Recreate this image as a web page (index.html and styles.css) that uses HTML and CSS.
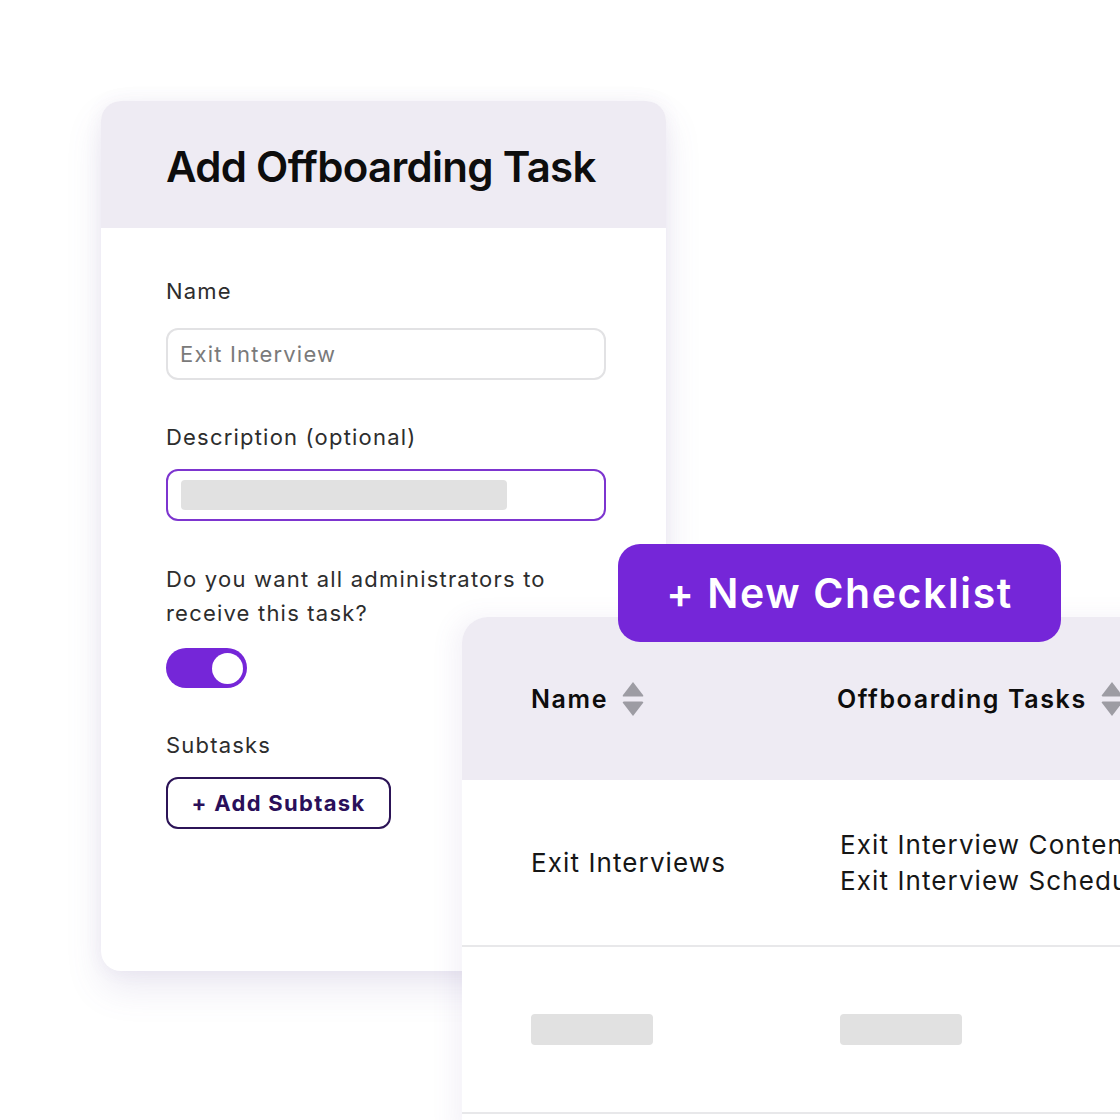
FILE: index.html
```html
<!DOCTYPE html>
<html lang="en">
<head>
<meta charset="utf-8">
<title>Add Offboarding Task</title>
<link rel="stylesheet" href="styles.css">
</head>
<body>
<div class="canvas">
  <section class="form-card">
    <header class="form-head">
      <h1 class="form-title">Add Offboarding Task</h1>
    </header>
    <div class="form-body">
      <div class="label label-name">Name</div>
      <div class="field">Exit Interview</div>
      <div class="label gap">Description (optional)</div>
      <div class="field field-active"><span class="skeleton skeleton-wide"></span></div>
      <div class="label gap label-question">Do you want all administrators to<br>receive this task?</div>
      <div class="toggle"><span class="knob"></span></div>
      <div class="label gap">Subtasks</div>
      <button class="btn-outline">+ Add Subtask</button>
    </div>
  </section>

  <section class="table-card">
    <div class="t-row t-head">
      <div class="t-cell th">Name <svg class="sort" viewBox="0 0 22 36" width="22" height="36"><path d="M11 1 L21 14 Q22 15.5 20 15.5 H2 Q0 15.5 1 14 Z" fill="#9d9ca3"/><path d="M11 35 L21 22 Q22 20.5 20 20.5 H2 Q0 20.5 1 22 Z" fill="#9d9ca3"/></svg></div>
      <div class="t-cell th th2">Offboarding Tasks <svg class="sort" viewBox="0 0 22 36" width="22" height="36"><path d="M11 1 L21 14 Q22 15.5 20 15.5 H2 Q0 15.5 1 14 Z" fill="#9d9ca3"/><path d="M11 35 L21 22 Q22 20.5 20 20.5 H2 Q0 20.5 1 22 Z" fill="#9d9ca3"/></svg></div>
    </div>
    <div class="t-row t-body">
      <div class="t-cell">Exit Interviews</div>
      <div class="t-cell td2">Exit Interview Content<br>Exit Interview Scheduling</div>
    </div>
    <div class="t-row t-body">
      <div class="t-cell"><span class="skeleton skeleton-sm"></span></div>
      <div class="t-cell td2"><span class="skeleton skeleton-sm"></span></div>
    </div>
  </section>

  <button class="btn-primary">+ New Checklist</button>
</div>
</body>
</html>
```

FILE: styles.css
```css
html, body {
  margin: 0;
  padding: 0;
  background: #ffffff;
}

body {
  width: 1120px;
  height: 1120px;
  overflow: hidden;
  font-family: "Inter", "DejaVu Sans", sans-serif;
  color: #2b2b2b;
}

.canvas {
  position: relative;
  width: 1120px;
  height: 1120px;
  padding: 101px 0 0 101px;
  box-sizing: border-box;
}

/* ---------- form card ---------- */
.form-card {
  width: 565px;
  height: 870px;
  background: #ffffff;
  border-radius: 20px;
  overflow: hidden;
  box-shadow: 0 18px 36px rgba(110, 90, 160, 0.13), 0 0 18px rgba(110, 90, 160, 0.07);
}

.form-head {
  height: 127px;
  background: #eeebf3;
  display: flex;
  align-items: center;
  padding: 4px 0 0 65px;
  box-sizing: border-box;
}

.form-title {
  margin: 0;
  font-size: 42px;
  font-weight: 600;
  letter-spacing: -0.7px;
  color: #0d0d0d;
}

.form-body {
  padding: 46px 0 0 65px;
  display: flex;
  flex-direction: column;
  align-items: flex-start;
}

.label {
  font-size: 22px;
  line-height: 34px;
  letter-spacing: 1.2px;
  color: #2d2d2d;
  margin-bottom: 15px;
}

.label.gap {
  margin-top: 40px;
}

.label-name {
  margin-bottom: 20px;
}

.label.label-question {
  margin-top: 41px;
  margin-bottom: 18px;
}

.field {
  width: 440px;
  height: 52px;
  box-sizing: border-box;
  border: 2px solid #e2e2e4;
  border-radius: 12px;
  display: flex;
  align-items: center;
  padding-left: 12px;
  font-size: 22px;
  letter-spacing: 1.2px;
  color: #7a7a7a;
}

.field-active {
  border-color: #7d35cf;
}

.skeleton {
  display: block;
  background: #e1e1e1;
  border-radius: 4px;
}

.skeleton-wide {
  width: 326px;
  height: 30px;
  margin-left: 1px;
}

.skeleton-sm {
  width: 122px;
  height: 31px;
}

.toggle {
  width: 81px;
  height: 40px;
  border-radius: 20px;
  background: #7526d8;
  display: flex;
  align-items: center;
  justify-content: flex-end;
  padding-right: 4px;
  box-sizing: border-box;
}

.knob {
  width: 31px;
  height: 31px;
  border-radius: 50%;
  background: #ffffff;
}

.btn-outline {
  width: 225px;
  height: 52px;
  border: 2px solid #2c1457;
  border-radius: 12px;
  background: #ffffff;
  font-family: "Inter", "DejaVu Sans", sans-serif;
  font-size: 22px;
  font-weight: 700;
  letter-spacing: 1.3px;
  color: #2a0f5a;
  padding: 0;
}

/* ---------- table card ---------- */
.table-card {
  position: absolute;
  left: 462px;
  top: 617px;
  width: 720px;
  height: 520px;
  background: #ffffff;
  border-top-left-radius: 26px;
  overflow: hidden;
  box-shadow: -8px 0 24px rgba(110, 90, 160, 0.08);
}

.t-row {
  display: grid;
  grid-template-columns: 309px 1fr;
  padding-left: 69px;
  align-items: center;
}

.t-head {
  height: 163px;
  background: #eeebf3;
}

.t-body {
  height: 165px;
  border-bottom: 2px solid #e8e8ea;
}

.t-cell {
  font-size: 26px;
  line-height: 36px;
  letter-spacing: 1.1px;
  color: #161616;
  white-space: nowrap;
}

.th {
  display: flex;
  align-items: center;
  gap: 14px;
  font-size: 25px;
  font-weight: 600;
  letter-spacing: 1.6px;
  color: #0d0d0d;
}

.th2 {
  margin-left: -3px;
}

.sort {
  display: block;
}

/* ---------- primary button ---------- */
.btn-primary {
  position: absolute;
  left: 618px;
  top: 544px;
  width: 443px;
  height: 98px;
  border: none;
  border-radius: 22px;
  background: #7526d8;
  color: #ffffff;
  font-family: "Inter", "DejaVu Sans", sans-serif;
  font-size: 41px;
  font-weight: 600;
  letter-spacing: 1.6px;
  padding: 0;
}
```
